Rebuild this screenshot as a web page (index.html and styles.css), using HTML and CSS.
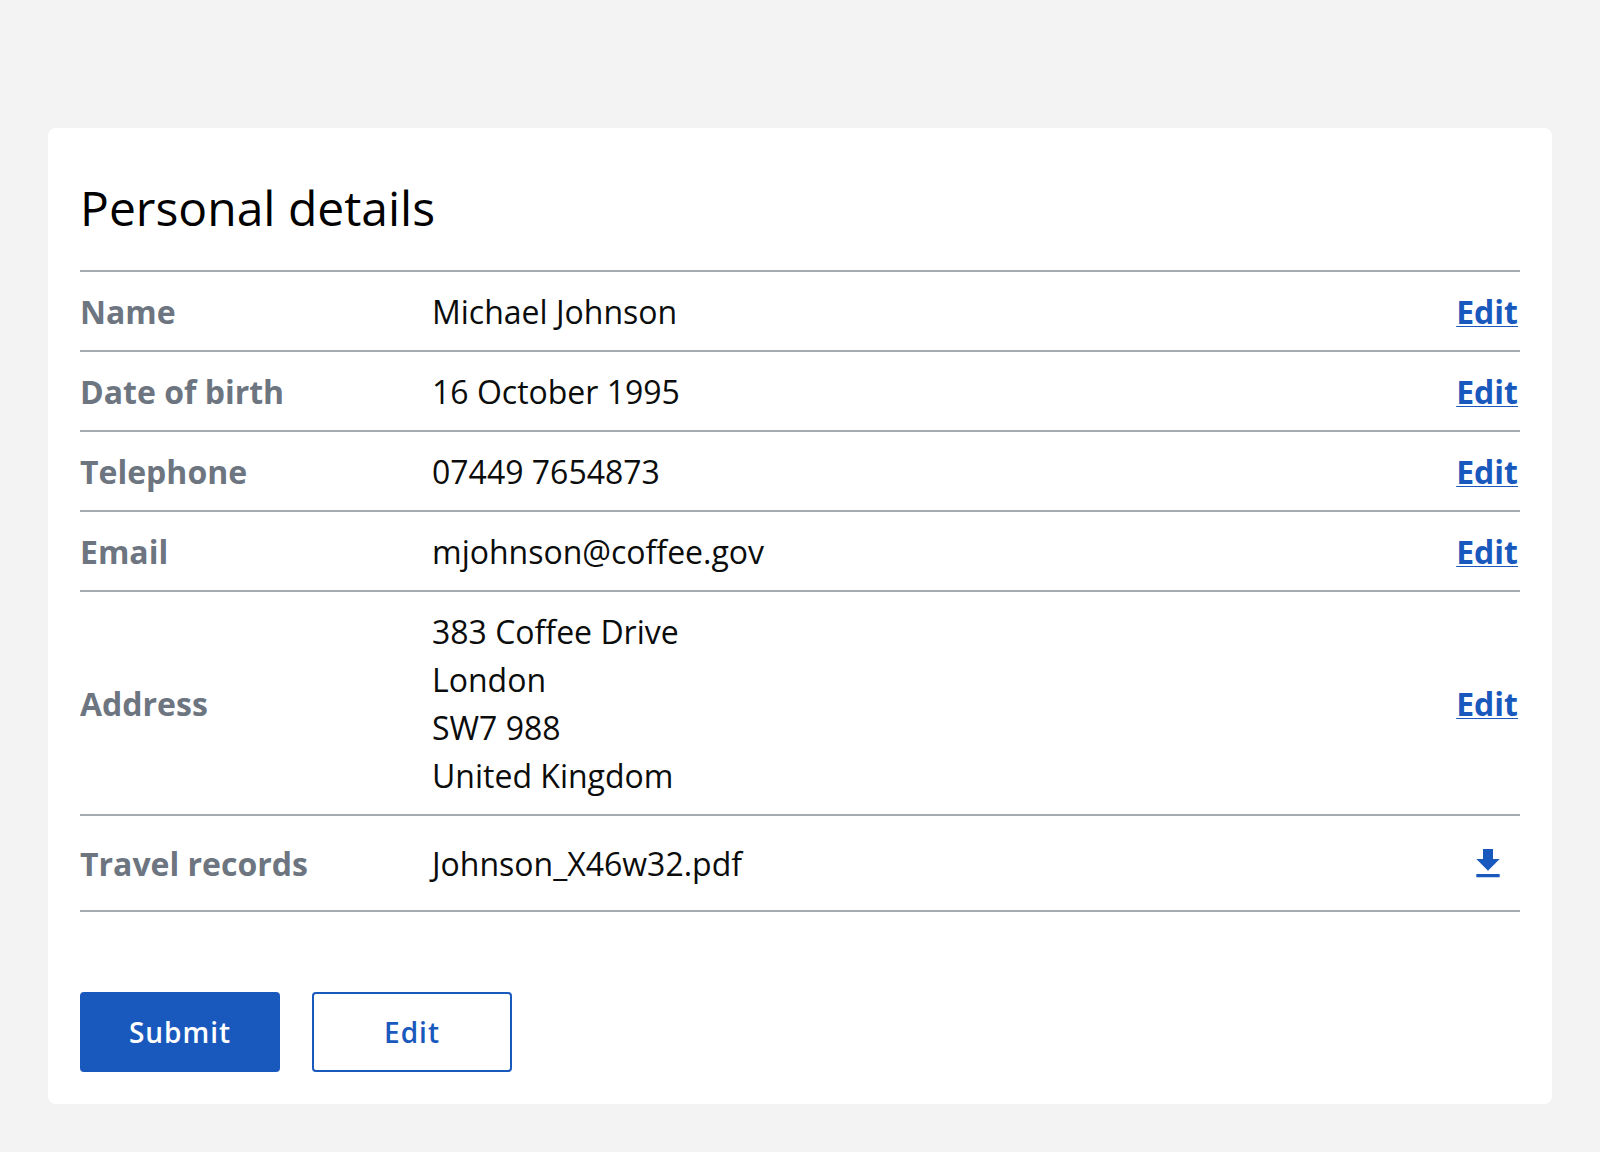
FILE: index.html
```html
<!DOCTYPE html>
<html lang="en">
<head>
<meta charset="utf-8">
<meta name="viewport" content="width=device-width, initial-scale=1">
<title>Personal details</title>
<link rel="stylesheet" href="styles.css">
</head>
<body>
<main class="card">
  <h1 class="card-title">Personal details</h1>
  <table class="details">
    <tbody>
      <tr><th scope="row">Name</th><td>Michael Johnson</td><td class="action"><a class="edit-link" href="#name" aria-label="Edit name">Edit</a></td></tr>
      <tr><th scope="row">Date of birth</th><td>16 October 1995</td><td class="action"><a class="edit-link" href="#dob" aria-label="Edit date of birth">Edit</a></td></tr>
      <tr><th scope="row">Telephone</th><td>07449 7654873</td><td class="action"><a class="edit-link" href="#telephone" aria-label="Edit telephone">Edit</a></td></tr>
      <tr><th scope="row">Email</th><td>mjohnson@coffee.gov</td><td class="action"><a class="edit-link" href="#email" aria-label="Edit email">Edit</a></td></tr>
      <tr><th scope="row">Address</th><td>383 Coffee Drive<br>London<br>SW7 988<br>United Kingdom</td><td class="action"><a class="edit-link" href="#address" aria-label="Edit address">Edit</a></td></tr>
      <tr class="file-row"><th scope="row">Travel records</th><td>Johnson_X46w32.pdf</td><td class="action">
        <button class="download" type="button" aria-label="Download travel records">
          <svg viewBox="0 0 24 24" width="40" height="40" aria-hidden="true"><path fill="currentColor" d="M19 9h-4V3H9v6H5l7 7 7-7zM5 18v2h14v-2H5z"/></svg>
        </button></td></tr>
    </tbody>
  </table>
  <div class="buttons">
    <button class="button button-primary" type="button">Submit</button>
    <button class="button button-secondary" type="button">Edit</button>
  </div>
</main>
</body>
</html>
```
FILE: styles.css
```css
* {
  box-sizing: border-box;
}

body {
  margin: 0;
  padding: 128px 48px 48px;
  background: #f3f3f3;
  color: #0b0c0c;
  font-family: "Open Sans", sans-serif;
  font-size: 32px;
  line-height: 48px;
}

.card {
  padding: 48px 32px 32px;
  border-radius: 8px;
  background: #fff;
}

.card-title {
  margin: 0 0 30px;
  color: #000;
  font-size: 48px;
  font-weight: 400;
  line-height: 64px;
}

.details {
  width: 100%;
  border-collapse: collapse;
  border-top: 2px solid #a6abb2;
}

.details tr {
  border-bottom: 2px solid #a6abb2;
}

.details th,
.details td {
  padding: 16px 0 14px;
  vertical-align: middle;
}

.details th {
  width: 352px;
  color: #6c7580;
  font-weight: 700;
  text-align: left;
}

.details .action {
  width: 160px;
  text-align: right;
}

.details .file-row th,
.details .file-row td {
  padding: 24px 0 22px;
}

.edit-link {
  padding-right: 2px;
  color: #1959bd;
  font-weight: 700;
  text-decoration: underline 1px;
  text-underline-offset: 2px;
}

.download {
  display: inline-flex;
  align-items: center;
  justify-content: center;
  width: 64px;
  height: 48px;
  padding: 0;
  border: 0;
  background: none;
  color: #1959bd;
  vertical-align: top;
}

.buttons {
  display: flex;
  gap: 32px;
  margin-top: 80px;
}

.button {
  width: 200px;
  height: 80px;
  border: 2px solid #1959bd;
  border-radius: 4px;
  font-family: inherit;
  font-size: 28px;
  font-weight: 600;
  letter-spacing: 1px;
}

.button-primary {
  background: #1959bd;
  color: #fff;
}

.button-secondary {
  background: #fff;
  color: #1959bd;
}
```
